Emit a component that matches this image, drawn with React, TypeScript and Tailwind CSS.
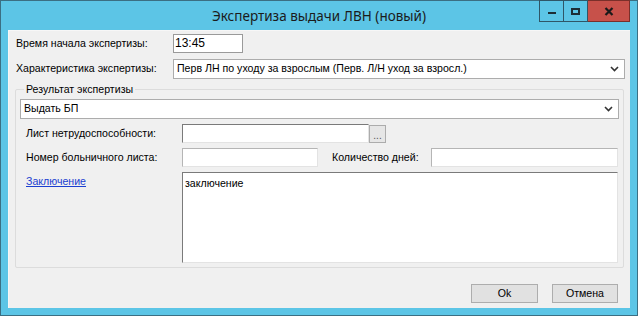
import React from "react";

function ComboBox({ value, className }: { value: string; className: string }) {
  return (
    <div
      className={`flex items-center justify-between bg-white border border-[#acacac] pl-[3px] pr-[5px] ${className}`}
    >
      <span className="truncate">{value}</span>
      <svg width="9" height="6" viewBox="0 0 9 6" className="shrink-0">
        <path d="M1 1 L4.5 4.5 L8 1" fill="none" stroke="#333" strokeWidth="1.6" />
      </svg>
    </div>
  );
}

function SunkenInput({ className, children }: { className: string; children?: React.ReactNode }) {
  return (
    <div
      className={`bg-white border-t border-l border-t-[#7a7a7a] border-l-[#7a7a7a] border-b border-r border-b-[#e3e3e3] border-r-[#e3e3e3] ${className}`}
    >
      {children}
    </div>
  );
}

export default function App() {
  return (
    <div
      className="w-[638px] h-[316px] bg-[#5cc5e6] border border-[#3b6f83] flex flex-col text-[10.6px] text-black"
      style={{ fontFamily: '"Liberation Sans", Arial, sans-serif' }}
    >
      {/* title bar */}
      <div className="h-[29px] shrink-0 flex items-start relative">
        <div
          className="flex-1 text-center pt-[5px] text-[13.5px] text-[#1b1b1b]"
          style={{ fontFamily: '"Noto Sans", "Open Sans", sans-serif' }}
        >
          Экспертиза выдачи ЛВН (новый)
        </div>
        <div className="absolute right-[7px] top-[-1px] flex h-[22px]">
          <div className="w-[25px] border border-[#2f5667] flex items-center justify-center">
            <div className="w-[8px] h-[2px] bg-[#1d2e36] mt-[3px]" />
          </div>
          <div className="w-[24px] border border-l-0 border-[#2f5667] flex items-center justify-center">
            <div className="w-[9px] h-[7px] border-2 border-[#1d2e36]" />
          </div>
          <div className="w-[42px] bg-[#c7514a] border border-l-0 border-[#7a2f2a] flex items-center justify-center">
            <svg width="10" height="9" viewBox="0 0 10 9">
              <path d="M1.5 1 L8.5 8 M8.5 1 L1.5 8" stroke="#1a1a1a" strokeWidth="2.2" />
            </svg>
          </div>
        </div>
      </div>

      {/* client area */}
      <div className="flex-1 mx-[7px] mb-[7px] bg-[#f0f0f0] border-l border-t border-[#f7f7f7] flex flex-col pt-[3px]">
        <div className="flex items-center h-[19px]">
          <span className="w-[164px] pl-[7px]">Время начала экспертизы:</span>
          <div className="w-[70px] h-[19px] bg-white border border-[#9a9a9a] pl-[1px] text-[12px] leading-[17px]">
            13:45
          </div>
        </div>

        <div className="flex items-center h-[20px] mt-[6px]">
          <span className="w-[164px] pl-[7px]">Характеристика экспертизы:</span>
          <ComboBox
            className="w-[452px] h-[20px]"
            value="Перв ЛН по уходу за взрослым (Перв. Л/Н уход за взросл.)"
          />
        </div>

        <fieldset className="mt-[3px] ml-[6px] mr-[6px] border border-[#dcdcdc] rounded-[2px] px-[4px] pb-[5px] h-[186px]">
          <legend className="ml-[4px] px-[2px] leading-[14px]">Результат экспертизы</legend>
          <ComboBox className="h-[20px] mt-[3px]" value="Выдать БП" />

          <div className="flex items-center mt-[5px] h-[19px]">
            <span className="w-[162px] pl-[6px]">Лист нетрудоспособности:</span>
            <SunkenInput className="w-[187px] h-[19px]" />
            <div className="w-[17px] h-[18px] border border-[#acacac] bg-[#e6e6e6] flex items-end justify-center text-[10px] leading-[12px] text-[#555]">
              ...
            </div>
          </div>

          <div className="flex items-center mt-[5px] h-[19px]">
            <span className="w-[162px] pl-[6px]">Номер больничного листа:</span>
            <div className="w-[136px] h-[19px] bg-white border border-[#b5b5b5] border-b-[#e3e3e3] border-r-[#e3e3e3]" />
            <span className="w-[113px] pl-[14px]">Количество дней:</span>
            <div className="flex-1 mr-[1px] h-[19px] bg-white border border-[#b5b5b5] border-b-[#e3e3e3] border-r-[#e3e3e3]" />
          </div>

          <div className="flex mt-[5px]">
            <span className="w-[162px] pl-[6px] pt-[2px] text-[#1b3fd1] underline">Заключение</span>
            <SunkenInput className="flex-1 mr-[1px] h-[91px] pl-[2px] pt-[3px]">
              заключение
            </SunkenInput>
          </div>
        </fieldset>

        <div className="flex justify-end gap-[14px] mt-[16px] pr-[12px]">
          <div className="w-[67px] h-[19px] bg-[#e1e1e1] border border-[#adadad] flex items-center justify-center">
            Ok
          </div>
          <div className="w-[66px] h-[19px] bg-[#e1e1e1] border border-[#adadad] flex items-center justify-center">
            Отмена
          </div>
        </div>
      </div>
    </div>
  );
}
